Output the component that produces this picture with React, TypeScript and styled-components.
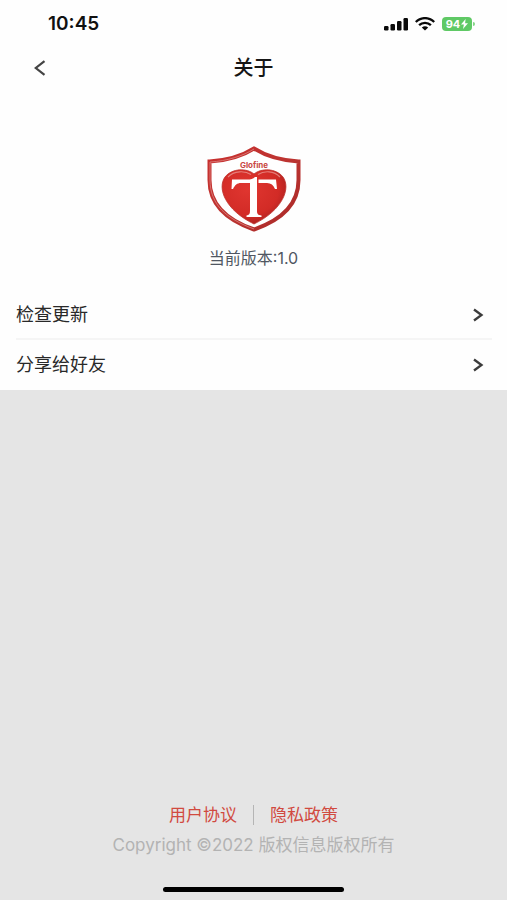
import React from "react";
import styled, { createGlobalStyle } from "styled-components";

const GlobalStyle = createGlobalStyle`
  * { box-sizing: border-box; }
  body {
    margin: 0;
    background: #e5e5e5;
    color: #262626;
    font-family: Inter, "Noto Sans CJK SC", sans-serif;
  }
`;

const Page = styled.div`
  display: flex;
  flex-direction: column;
  min-height: 100vh;
`;

const Panel = styled.main`
  background: #fefefe;
`;

const StatusBar = styled.div`
  display: flex;
  align-items: center;
  justify-content: space-between;
  height: 48px;
  padding: 0 32px 0 48px;
`;

const Time = styled.time`
  color: #111;
  font-size: 19px;
  font-weight: 600;
  line-height: 24px;
`;

const StatusIcons = styled.div`
  display: flex;
  align-items: center;
  gap: 7px;
`;

const BatteryGroup = styled.div`
  display: flex;
  align-items: center;
  gap: 1px;
`;

const Battery = styled.div`
  display: flex;
  align-items: center;
  justify-content: center;
  gap: 1px;
  width: 30px;
  height: 14px;
  border-radius: 4px;
  background: #5fc965;
  color: #fff;
  font-size: 11px;
  font-weight: 700;
  line-height: 14px;
`;

const BatteryTip = styled.span`
  width: 2px;
  height: 4px;
  border-radius: 0 2px 2px 0;
  background: #83d487;
`;

const NavBar = styled.header`
  display: grid;
  grid-template-columns: 48px 1fr 48px;
  align-items: center;
  height: 40px;
  padding: 0 16px;
`;

const BackButton = styled.button`
  display: flex;
  align-items: center;
  justify-content: center;
  height: 40px;
  padding: 0;
  border: 0;
  background: none;
  color: #444;
  cursor: pointer;
`;

const Title = styled.h1`
  margin: 0;
  color: #161616;
  font-size: 20px;
  font-weight: 500;
  line-height: 28px;
  text-align: center;
`;

const Brand = styled.section`
  display: flex;
  flex-direction: column;
  align-items: center;
  gap: 14px;
  padding: 58px 16px 20px;
`;

const Version = styled.p`
  margin: 0;
  color: #505762;
  font-size: 16px;
  line-height: 24px;
`;

const Menu = styled.nav`
  padding: 0 15px 0 16px;
`;

const MenuRow = styled.button`
  display: flex;
  align-items: center;
  justify-content: space-between;
  width: 100%;
  height: 50px;
  padding: 2px 8px 0 0;
  border: 0;
  border-bottom: 2px solid #f5f5f5;
  background: none;
  color: #292929;
  font: inherit;
  font-size: 18px;
  line-height: 24px;
  cursor: pointer;

  &:last-child {
    border-bottom-color: transparent;
  }
`;

const Footer = styled.footer`
  display: flex;
  flex-direction: column;
  align-items: center;
  margin-top: auto;
  padding: 0 16px 8px;
`;

const Links = styled.div`
  display: flex;
  align-items: center;
`;

const LegalLink = styled.a`
  padding: 0 16px;
  color: #d14a3f;
  font-size: 17px;
  line-height: 24px;
  text-decoration: none;
`;

const Divider = styled.span`
  width: 1px;
  height: 20px;
  background: #b5b5b5;
`;

const Copyright = styled.p`
  margin: 6px 0 30px;
  color: #b3b3b3;
  font-size: 17px;
  line-height: 24px;
`;

const HomeBar = styled.div`
  width: 38%;
  height: 5px;
  border-radius: 3px;
  background: #000;
`;

function SignalIcon() {
  return (
    <svg width="24" height="13" viewBox="0 0 24 13" fill="#0a0a0a" aria-hidden="true">
      <rect x="0" y="8" width="4.500" height="4.500" rx="1.200" />
      <rect x="6.500" y="6" width="4.500" height="6.500" rx="1.200" />
      <rect x="13" y="3" width="4.500" height="9.500" rx="1.200" />
      <rect x="19.500" y="0" width="4.500" height="12.500" rx="1.200" />
    </svg>
  );
}

function WifiIcon() {
  return (
    <svg width="20" height="14" viewBox="0 0 20 14" aria-hidden="true">
      <g fill="none" stroke="#0a0a0a" strokeWidth="2.300">
        <path d="M.8 5C6-.2 14-.2 19.200 5" />
        <path d="M4.100 8.200C7.400 5 12.600 5 15.900 8.200" />
      </g>
      <path d="M6.800 10.500Q10 7.800 13.200 10.500L10 13.500Z" fill="#0a0a0a" />
    </svg>
  );
}

function BoltIcon() {
  return (
    <svg width="7" height="10" viewBox="0 0 7 10" fill="#fff" aria-hidden="true">
      <path d="M4.600 0 0 5.600h2.900L2 10l5-5.800H4.100Z" />
    </svg>
  );
}

function Chevron({ back = false }: { back?: boolean }) {
  return back ? (
    <svg width="12" height="16" viewBox="0 0 12 16" aria-hidden="true">
      <path d="M10.500 1.200 1.800 8l8.700 6.800" fill="none" stroke="currentColor" strokeWidth="2.200" />
    </svg>
  ) : (
    <svg width="12" height="14" viewBox="0 0 12 14" aria-hidden="true">
      <path d="M2 1.500 9.500 7 2 12.500" fill="none" stroke="#3c3c3c" strokeWidth="2.300" />
    </svg>
  );
}

function ShieldLogo() {
  return (
    <svg width="94" height="86" viewBox="0 0 94 86" role="img" aria-label="Glofine">
      <defs>
        <linearGradient id="rim" x1="0" y1="0" x2="1" y2="1">
          <stop offset="0" stopColor="#c9302f" />
          <stop offset=".5" stopColor="#bd3431" />
          <stop offset="1" stopColor="#a92928" />
        </linearGradient>
        <radialGradient id="heart" cx=".4" cy=".35" r=".75">
          <stop offset="0" stopColor="#e03630" />
          <stop offset=".65" stopColor="#d22b26" />
          <stop offset="1" stopColor="#9c1d1d" />
        </radialGradient>
      </defs>
      <path
        d="M47 2.500C36 9.500 20 14.500 2.500 15.500V34c0 25 17 40 44.500 49.500C74.500 74 91.500 59 91.500 34V15.500C74 14.500 58 9.500 47 2.500Z"
        fill="#fff"
        stroke="url(#rim)"
        strokeWidth="4"
      />
      <path
        d="M47 3C36 10 20 15 3 16V34c0 25 17 39 44 49"
        fill="none"
        stroke="#dd8582"
        strokeWidth=".8"
      />
      <path
        d="M47 28C40 22 25 22 18 31C10 42 18 64 47 78C76 64 84 42 76 31C69 22 54 22 47 28Z"
        fill="url(#heart)"
        stroke="#bd2e2a"
        strokeWidth=".8"
      />
      <path
        d="M21 31C27 24.500 38 24.500 44 28.500M51 28.500C57 24.500 67 24.500 73 31"
        fill="none"
        stroke="#eda09b"
        strokeWidth="1.200"
        opacity=".7"
      />
      <path
        d="M25 33.500H40C44 33.500 46 33 48 31H50V65C50 68 51 69 54.500 69.500V71H39.500V69.500C42 69 43 68 43 65V37H34C30 37 28 39 26 43H24.500Z"
        fill="#fff"
      />
      <path
        d="M51.500 33.500H69L70 43H68C66.500 39 64 37 60 37H51.500Z"
        fill="#fff"
      />
      <text
        x="47"
        y="22"
        textAnchor="middle"
        fill="#c84743"
        fontFamily="Inter, sans-serif"
        fontSize="8"
        fontWeight="700"
      >
        Glofine
      </text>
    </svg>
  );
}

const menuItems = ["检查更新", "分享给好友"];

export default function App() {
  return (
    <Page lang="zh-CN">
      <GlobalStyle />
      <Panel>
        <StatusBar>
          <Time>10:45</Time>
          <StatusIcons>
            <SignalIcon />
            <WifiIcon />
            <BatteryGroup>
              <Battery>
                94
                <BoltIcon />
              </Battery>
              <BatteryTip />
            </BatteryGroup>
          </StatusIcons>
        </StatusBar>
        <NavBar>
          <BackButton type="button" aria-label="返回">
            <Chevron back />
          </BackButton>
          <Title>关于</Title>
        </NavBar>
        <Brand>
          <ShieldLogo />
          <Version>当前版本:1.0</Version>
        </Brand>
        <Menu>
          {menuItems.map((item) => (
            <MenuRow key={item} type="button">
              {item}
              <Chevron />
            </MenuRow>
          ))}
        </Menu>
      </Panel>
      <Footer>
        <Links>
          <LegalLink href="#terms">用户协议</LegalLink>
          <Divider />
          <LegalLink href="#privacy">隐私政策</LegalLink>
        </Links>
        <Copyright>Copyright ©2022 版权信息版权所有</Copyright>
        <HomeBar />
      </Footer>
    </Page>
  );
}
